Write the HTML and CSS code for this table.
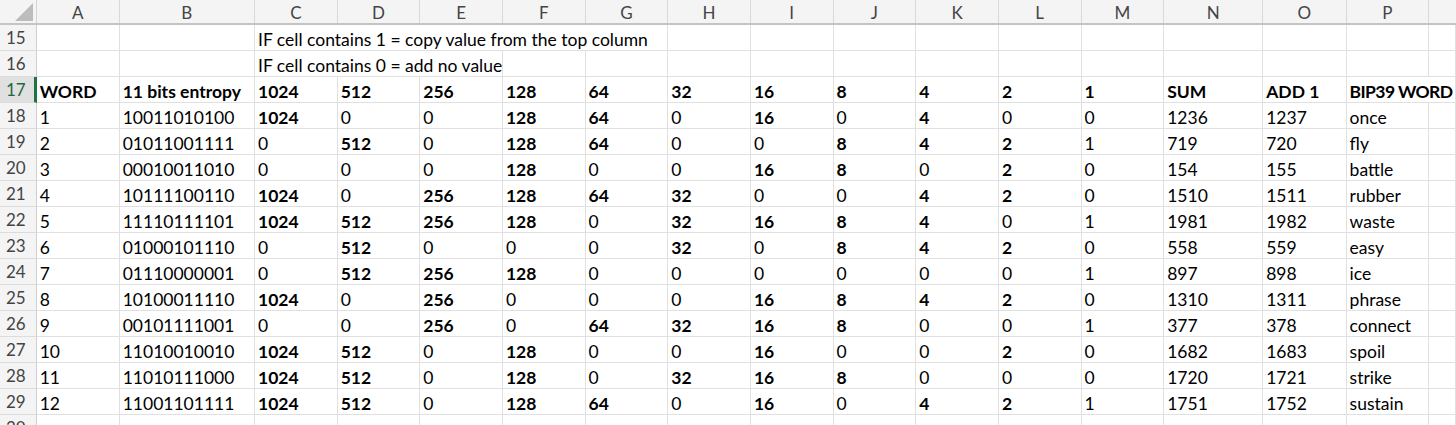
FILE: index.html
```html
<!DOCTYPE html>
<html lang="en">
<head>
<meta charset="utf-8">
<title>BIP39 sheet</title>
<link rel="stylesheet" href="styles.css">
</head>
<body>
<div class="sheet">
  <div class="row head">
    <div class="corner"><span class="tri"></span></div>
    <div class="ch">A</div><div class="ch">B</div><div class="ch">C</div><div class="ch">D</div><div class="ch">E</div><div class="ch">F</div><div class="ch">G</div><div class="ch">H</div><div class="ch">I</div><div class="ch">J</div><div class="ch">K</div><div class="ch">L</div><div class="ch">M</div><div class="ch">N</div><div class="ch">O</div><div class="ch">P</div><div class="ch last"></div>
  </div>
  <div class="row">
    <div class="rh">15</div><div class="c"></div><div class="c"></div>
    <div class="c span5">IF cell contains 1 = copy value from the top column</div>
    <div class="c"></div><div class="c"></div><div class="c"></div><div class="c"></div><div class="c"></div><div class="c"></div><div class="c"></div><div class="c"></div><div class="c"></div><div class="c"></div>
  </div>
  <div class="row">
    <div class="rh">16</div><div class="c"></div><div class="c"></div>
    <div class="c span3">IF cell contains 0 = add no value</div>
    <div class="c"></div><div class="c"></div><div class="c"></div><div class="c"></div><div class="c"></div><div class="c"></div><div class="c"></div><div class="c"></div><div class="c"></div><div class="c"></div><div class="c"></div><div class="c"></div>
  </div>
  <div class="row bold">
    <div class="rh sel">17</div>
    <div class="c">WORD</div><div class="c">11 bits entropy</div><div class="c">1024</div><div class="c">512</div><div class="c">256</div><div class="c">128</div><div class="c">64</div><div class="c">32</div><div class="c">16</div><div class="c">8</div><div class="c">4</div><div class="c">2</div><div class="c">1</div><div class="c">SUM</div><div class="c">ADD 1</div><div class="c span2 tight">BIP39 WORD</div>
  </div>
  <div class="row"><div class="rh">18</div><div class="c">1</div><div class="c">10011010100</div><div class="c b">1024</div><div class="c">0</div><div class="c">0</div><div class="c b">128</div><div class="c b">64</div><div class="c">0</div><div class="c b">16</div><div class="c">0</div><div class="c b">4</div><div class="c">0</div><div class="c">0</div><div class="c">1236</div><div class="c">1237</div><div class="c">once</div><div class="c"></div></div>
  <div class="row"><div class="rh">19</div><div class="c">2</div><div class="c">01011001111</div><div class="c">0</div><div class="c b">512</div><div class="c">0</div><div class="c b">128</div><div class="c b">64</div><div class="c">0</div><div class="c">0</div><div class="c b">8</div><div class="c b">4</div><div class="c b">2</div><div class="c">1</div><div class="c">719</div><div class="c">720</div><div class="c">fly</div><div class="c"></div></div>
  <div class="row"><div class="rh">20</div><div class="c">3</div><div class="c">00010011010</div><div class="c">0</div><div class="c">0</div><div class="c">0</div><div class="c b">128</div><div class="c">0</div><div class="c">0</div><div class="c b">16</div><div class="c b">8</div><div class="c">0</div><div class="c b">2</div><div class="c">0</div><div class="c">154</div><div class="c">155</div><div class="c">battle</div><div class="c"></div></div>
  <div class="row"><div class="rh">21</div><div class="c">4</div><div class="c">10111100110</div><div class="c b">1024</div><div class="c">0</div><div class="c b">256</div><div class="c b">128</div><div class="c b">64</div><div class="c b">32</div><div class="c">0</div><div class="c">0</div><div class="c b">4</div><div class="c b">2</div><div class="c">0</div><div class="c">1510</div><div class="c">1511</div><div class="c">rubber</div><div class="c"></div></div>
  <div class="row"><div class="rh">22</div><div class="c">5</div><div class="c">11110111101</div><div class="c b">1024</div><div class="c b">512</div><div class="c b">256</div><div class="c b">128</div><div class="c">0</div><div class="c b">32</div><div class="c b">16</div><div class="c b">8</div><div class="c b">4</div><div class="c">0</div><div class="c">1</div><div class="c">1981</div><div class="c">1982</div><div class="c">waste</div><div class="c"></div></div>
  <div class="row"><div class="rh">23</div><div class="c">6</div><div class="c">01000101110</div><div class="c">0</div><div class="c b">512</div><div class="c">0</div><div class="c">0</div><div class="c">0</div><div class="c b">32</div><div class="c">0</div><div class="c b">8</div><div class="c b">4</div><div class="c b">2</div><div class="c">0</div><div class="c">558</div><div class="c">559</div><div class="c">easy</div><div class="c"></div></div>
  <div class="row"><div class="rh">24</div><div class="c">7</div><div class="c">01110000001</div><div class="c">0</div><div class="c b">512</div><div class="c b">256</div><div class="c b">128</div><div class="c">0</div><div class="c">0</div><div class="c">0</div><div class="c">0</div><div class="c">0</div><div class="c">0</div><div class="c">1</div><div class="c">897</div><div class="c">898</div><div class="c">ice</div><div class="c"></div></div>
  <div class="row"><div class="rh">25</div><div class="c">8</div><div class="c">10100011110</div><div class="c b">1024</div><div class="c">0</div><div class="c b">256</div><div class="c">0</div><div class="c">0</div><div class="c">0</div><div class="c b">16</div><div class="c b">8</div><div class="c b">4</div><div class="c b">2</div><div class="c">0</div><div class="c">1310</div><div class="c">1311</div><div class="c">phrase</div><div class="c"></div></div>
  <div class="row"><div class="rh">26</div><div class="c">9</div><div class="c">00101111001</div><div class="c">0</div><div class="c">0</div><div class="c b">256</div><div class="c">0</div><div class="c b">64</div><div class="c b">32</div><div class="c b">16</div><div class="c b">8</div><div class="c">0</div><div class="c">0</div><div class="c">1</div><div class="c">377</div><div class="c">378</div><div class="c">connect</div><div class="c"></div></div>
  <div class="row"><div class="rh">27</div><div class="c">10</div><div class="c">11010010010</div><div class="c b">1024</div><div class="c b">512</div><div class="c">0</div><div class="c b">128</div><div class="c">0</div><div class="c">0</div><div class="c b">16</div><div class="c">0</div><div class="c">0</div><div class="c b">2</div><div class="c">0</div><div class="c">1682</div><div class="c">1683</div><div class="c">spoil</div><div class="c"></div></div>
  <div class="row"><div class="rh">28</div><div class="c">11</div><div class="c">11010111000</div><div class="c b">1024</div><div class="c b">512</div><div class="c">0</div><div class="c b">128</div><div class="c">0</div><div class="c b">32</div><div class="c b">16</div><div class="c b">8</div><div class="c">0</div><div class="c">0</div><div class="c">0</div><div class="c">1720</div><div class="c">1721</div><div class="c">strike</div><div class="c"></div></div>
  <div class="row"><div class="rh">29</div><div class="c">12</div><div class="c">11001101111</div><div class="c b">1024</div><div class="c b">512</div><div class="c">0</div><div class="c b">128</div><div class="c b">64</div><div class="c">0</div><div class="c b">16</div><div class="c">0</div><div class="c b">4</div><div class="c b">2</div><div class="c">1</div><div class="c">1751</div><div class="c">1752</div><div class="c">sustain</div><div class="c"></div></div>
  <div class="row"><div class="rh">30</div><div class="c"></div><div class="c"></div><div class="c"></div><div class="c"></div><div class="c"></div><div class="c"></div><div class="c"></div><div class="c"></div><div class="c"></div><div class="c"></div><div class="c"></div><div class="c"></div><div class="c"></div><div class="c"></div><div class="c"></div><div class="c"></div><div class="c"></div></div>
</div>
</body>
</html>
```

FILE: styles.css
```css
html, body {
  margin: 0;
  padding: 0;
  background: #ffffff;
  overflow: hidden;
}
body {
  font-family: Lato, "Liberation Sans", sans-serif;
  font-size: 17.5px;
  color: #000;
}
.sheet {
  width: 1456px;
  height: 425px;
  overflow: hidden;
}
.row {
  display: grid;
  grid-template-columns: 36.7px 83px 135.3px repeat(11, 82.66px) 99px 83.4px 82.6px 1fr;
  height: 26px;
}
.row.head {
  height: 25px;
  background: #f4f4f4;
  border-bottom: 2px solid #c4c4c4;
  box-sizing: border-box;
}
.corner {
  position: relative;
  border-right: 1px solid #d6d6d6;
}
.tri {
  position: absolute;
  right: 3px;
  bottom: 2px;
  width: 0;
  height: 0;
  border-left: 18px solid transparent;
  border-bottom: 18px solid #bdbdbd;
}
.ch {
  display: flex;
  align-items: center;
  justify-content: center;
  border-right: 1px solid #d9d9d9;
  color: #444;
  font-size: 17px;
  padding-top: 1px;
}
.ch.last { border-right: none; }
.rh {
  background: #f4f4f4;
  border-right: 1px solid #cfcfcf;
  border-bottom: 1px solid #dcdcdc;
  color: #444;
  display: flex;
  align-items: flex-end;
  padding: 0 0 2px 6px;
  box-sizing: border-box;
  font-size: 17px;
}
.rh.sel {
  background: #e0e0e0;
  color: #1d6b3c;
  border-right: 3px solid #1f7244;
}
.c {
  border-right: 1px solid #e0e0e0;
  border-bottom: 1px solid #e0e0e0;
  box-sizing: border-box;
  padding: 0 0 0 3px;
  display: flex;
  align-items: flex-end;
  white-space: nowrap;
  overflow: hidden;
}
.span5 { grid-column: span 5; }
.span3 { grid-column: span 3; }
.span2 { grid-column: span 2; }
.tight { letter-spacing: -0.6px; }
.bold .c, .c.b { font-weight: 700; }
```
